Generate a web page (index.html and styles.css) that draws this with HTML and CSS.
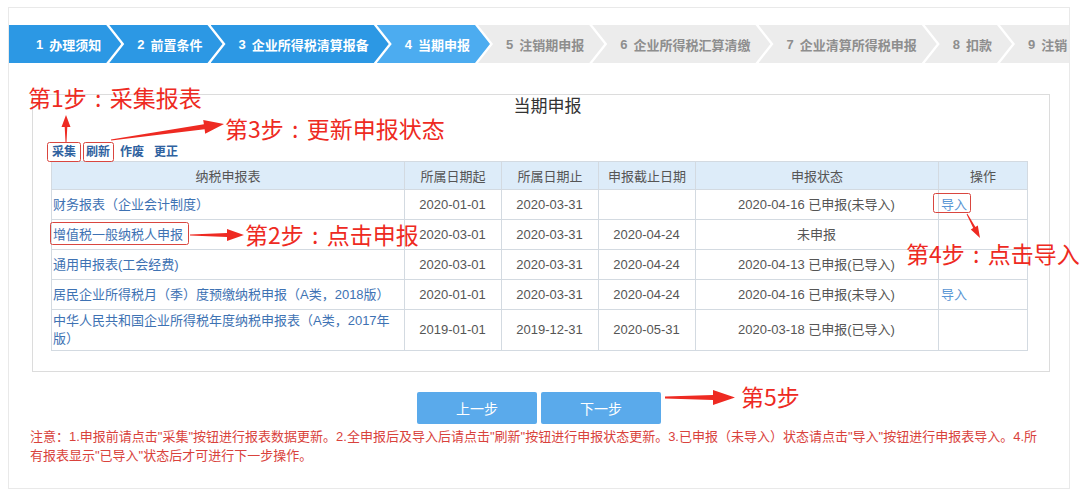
FILE: index.html
```html
<!DOCTYPE html>
<html lang="zh-CN">
<head>
    <meta charset="UTF-8">
    <meta name="viewport" content="width=device-width, initial-scale=1.0">
    <title>当期申报</title>
    <link rel="stylesheet" href="styles.css">
</head>
<body>
    <div class="page">
        <div class="steps">
            <div class="step done"><span class="step-no">1</span>办理须知</div>
            <div class="step done"><span class="step-no">2</span>前置条件</div>
            <div class="step done"><span class="step-no">3</span>企业所得税清算报备</div>
            <div class="step current"><span class="step-no">4</span>当期申报</div>
            <div class="step"><span class="step-no">5</span>注销期申报</div>
            <div class="step"><span class="step-no">6</span>企业所得税汇算清缴</div>
            <div class="step"><span class="step-no">7</span>企业清算所得税申报</div>
            <div class="step"><span class="step-no">8</span>扣款</div>
            <div class="step"><span class="step-no">9</span>注销</div>
        </div>

        <section class="panel">
            <h2 class="panel-title">当期申报</h2>
            <div class="toolbar">
                <a href="#" class="tool">采集</a>
                <a href="#" class="tool">刷新</a>
                <a href="#" class="tool">作废</a>
                <a href="#" class="tool">更正</a>
            </div>
            <table class="report-table">
                <colgroup>
                    <col class="col-name">
                    <col class="col-date">
                    <col class="col-date">
                    <col class="col-date">
                    <col class="col-status">
                    <col>
                </colgroup>
                <thead>
                    <tr>
                        <th>纳税申报表</th>
                        <th>所属日期起</th>
                        <th>所属日期止</th>
                        <th>申报截止日期</th>
                        <th>申报状态</th>
                        <th>操作</th>
                    </tr>
                </thead>
                <tbody>
                    <tr>
                        <td class="name">财务报表（企业会计制度）</td>
                        <td>2020-01-01</td>
                        <td>2020-03-31</td>
                        <td></td>
                        <td>2020-04-16 已申报(未导入)</td>
                        <td class="op"><a href="#" class="link">导入</a></td>
                    </tr>
                    <tr>
                        <td class="name">增值税一般纳税人申报</td>
                        <td>2020-03-01</td>
                        <td>2020-03-31</td>
                        <td>2020-04-24</td>
                        <td>未申报</td>
                        <td class="op"></td>
                    </tr>
                    <tr>
                        <td class="name">通用申报表(工会经费)</td>
                        <td>2020-03-01</td>
                        <td>2020-03-31</td>
                        <td>2020-04-24</td>
                        <td>2020-04-13 已申报(已导入)</td>
                        <td class="op"></td>
                    </tr>
                    <tr>
                        <td class="name">居民企业所得税月（季）度预缴纳税申报（A类，2018版）</td>
                        <td>2020-01-01</td>
                        <td>2020-03-31</td>
                        <td>2020-04-24</td>
                        <td>2020-04-16 已申报(未导入)</td>
                        <td class="op"><a href="#" class="link">导入</a></td>
                    </tr>
                    <tr>
                        <td class="name">中华人民共和国企业所得税年度纳税申报表（A类，2017年版）</td>
                        <td>2019-01-01</td>
                        <td>2019-12-31</td>
                        <td>2020-05-31</td>
                        <td>2020-03-18 已申报(已导入)</td>
                        <td class="op"></td>
                    </tr>
                </tbody>
            </table>
        </section>

        <div class="actions">
            <button class="btn">上一步</button>
            <button class="btn">下一步</button>
        </div>

        <p class="notice">注意：1.申报前请点击"采集"按钮进行报表数据更新。2.全申报后及导入后请点击"刷新"按钮进行申报状态更新。3.已申报（未导入）状态请点击"导入"按钮进行申报表导入。4.所有报表显示"已导入"状态后才可进行下一步操作。</p>
    </div>

    <!-- red callouts drawn over the screenshot -->
    <div class="annotations">
        <svg class="marks" width="1080" height="501" viewBox="0 0 1080 501">
            <g fill="none" stroke="#d9463f" stroke-width="1">
                <rect x="47.5" y="142.5" width="33" height="19" rx="2"/>
                <rect x="83.5" y="142.5" width="30" height="19" rx="2"/>
                <rect x="50.5" y="222.5" width="138" height="22" rx="2"/>
                <rect x="933.5" y="193.5" width="37" height="19" rx="2"/>
            </g>
            <g fill="#ee2a22">
                <polygon points="65.5,142 66.5,142 67.3,127 70.5,127 66,115 61.5,127 64.7,127"/>
                <polygon points="110.9,139.5 203.9,124.3 203.2,119.9 224,124 205.2,133.7 204.6,129.3 111.1,140.5"/>
                <polygon points="190,234.4 227,233 227,229 244,235 227,241 227,237 190,235.6"/>
                <polygon points="967.4,213.8 975.4,226.9 977.8,225.6 980,238 970.8,229.4 973.2,228.1 966.6,214.2"/>
                <polygon points="665,396.4 713,395 713,390 735,397.5 713,405 713,400 665,398.6"/>
            </g>
        </svg>
        <span class="note note-1">第1步<span class="colon">:</span>采集报表</span>
        <span class="note note-3">第3步<span class="colon">:</span>更新申报状态</span>
        <span class="note note-2">第2步<span class="colon">:</span>点击申报</span>
        <span class="note note-4">第4步<span class="colon">:</span>点击导入</span>
        <span class="note note-5">第5步</span>
    </div>
</body>
</html>
```

FILE: styles.css
```css
:root {
    --step-done: #2c98e4;
    --step-current: #4cacf0;
    --step-todo: #ececec;
    --step-todo-text: #8e8e8e;
    --text-color: #555;
    --link-color: #3e72b3;
    --border-color: #d3dae1;
    --note-red: #ee2a22;
}

* {
    box-sizing: border-box;
}

body {
    margin: 0;
    position: relative;
    background-color: #fff;
    color: var(--text-color);
    font-family: "Liberation Sans", "Noto Sans CJK SC", sans-serif;
}

.page {
    margin: 7px 10px 0 8px;
    border: 1px solid #e9e9e9;
    padding: 17px 0 23px;
}

/* step bar */
.steps {
    display: flex;
    height: 38px;
    overflow: hidden;
}

.step {
    flex: none;
    display: flex;
    align-items: center;
    margin-left: -12px;
    padding: 0 20px 0 28px;
    background-color: var(--step-todo);
    color: var(--step-todo-text);
    font-size: 13px;
    font-weight: 700;
    white-space: nowrap;
    clip-path: polygon(0 0, calc(100% - 15px) 0, 100% 50%, calc(100% - 15px) 100%, 0 100%, 15px 50%);
}

.step:first-child {
    margin-left: 0;
    padding-left: 27px;
    clip-path: polygon(0 0, calc(100% - 15px) 0, 100% 50%, calc(100% - 15px) 100%, 0 100%);
}

.step:last-child {
    flex: 1;
    clip-path: polygon(0 0, 100% 0, 100% 100%, 0 100%, 15px 50%);
}

.step.done {
    background-color: var(--step-done);
    color: #fff;
}

.step.current {
    background-color: var(--step-current);
    color: #fff;
}

.step-no {
    margin-right: 6px;
}

/* panel */
.panel {
    margin: 31px 19px 0 23px;
    border: 1px solid #dcdcdc;
    padding: 0 21px 20px 18px;
}

.panel-title {
    margin: 0;
    padding-left: 16px;
    font-size: 17px;
    font-weight: 400;
    line-height: 24px;
    text-align: center;
    color: #333;
}

.toolbar {
    display: flex;
    gap: 10px;
    margin-top: 24px;
    padding-left: 1px;
    line-height: 18px;
    font-size: 12px;
    font-weight: 700;
}

.tool {
    color: #2f62a0;
    text-decoration: none;
}

.report-table {
    width: 100%;
    border-collapse: collapse;
    table-layout: fixed;
    font-size: 13px;
}

.col-name { width: 353px; }
.col-date { width: 97px; }
.col-status { width: 243px; }

.report-table th {
    height: 28px;
    padding: 0;
    background-color: #ddecf9;
    border: 1px solid var(--border-color);
    font-weight: 400;
    color: var(--text-color);
}

.report-table td {
    height: 30px;
    padding: 2px 2px 2px 1px;
    line-height: 18px;
    border: 1px solid var(--border-color);
    text-align: center;
}

.report-table td.name {
    text-align: left;
    color: var(--link-color);
}

.report-table td.op {
    text-align: left;
    padding-left: 2px;
}

.link {
    color: #5a96d4;
    text-decoration: none;
}

/* buttons */
.actions {
    display: flex;
    justify-content: center;
    gap: 4px;
    margin-top: 20px;
}

.btn {
    width: 120px;
    height: 32px;
    border: none;
    border-radius: 2px;
    background-color: #5aaaeb;
    color: #fff;
    font-size: 14px;
    font-family: inherit;
    cursor: pointer;
}

.notice {
    margin: 3px 0 0;
    padding: 0 28px 0 21px;
    font-size: 13px;
    line-height: 19px;
    color: #d9423c;
}

/* full-width colon drawn centred, as the original font does */
.colon {
    display: inline-block;
    width: 1em;
    text-align: center;
}

/* annotations */
.annotations {
    position: absolute;
    top: 0;
    left: 0;
    width: 1080px;
    height: 501px;
    pointer-events: none;
}

.marks {
    position: absolute;
    top: 0;
    left: 0;
}

.note {
    position: absolute;
    font-family: "Noto Sans CJK SC", sans-serif;
    font-size: 23px;
    line-height: 1;
    color: var(--note-red);
    white-space: nowrap;
}

.note-1 { left: 28px; top: 86px; }
.note-3 { left: 225px; top: 117px; }
.note-2 { left: 245px; top: 223px; }
.note-4 { left: 906px; top: 242px; }
.note-5 { left: 741px; top: 385px; }
```
